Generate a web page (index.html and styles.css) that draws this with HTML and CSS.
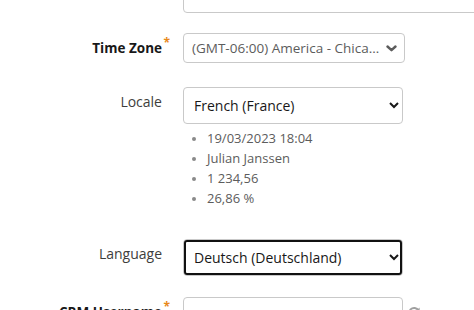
FILE: index.html
```html
<!DOCTYPE html>
<html lang="en">
  <head>
    <meta charset="UTF-8" />
    <meta name="viewport" content="width=device-width, initial-scale=1.0" />
    <title>User Settings</title>
    <link rel="stylesheet" href="styles.css">
  </head>
  <body>
    <div class="form">
      <div class="row row-top">
        <div class="label"></div>
        <div class="input input-wide"></div>
      </div>

      <div class="row row-tz">
        <div class="label bold"><span class="label-text">Time Zone<abbr class="req">*</abbr></span></div>
        <div class="combo">
          <span class="combo-text">(GMT-06:00) America - Chicago</span>
          <svg class="chevron" width="11" height="7" viewBox="0 0 11 7">
            <path d="M1.5 1.5 L5.5 5.2 L9.5 1.5" fill="none" stroke="#5c5c5c" stroke-width="2.4" stroke-linecap="round" stroke-linejoin="round" />
          </svg>
        </div>
      </div>

      <div class="row row-locale">
        <div class="label"><span class="label-text">Locale</span></div>
        <div class="field">
          <select class="select">
            <option>French (France)</option>
          </select>
          <ul class="samples">
            <li>19/03/2023 18:04</li>
            <li>Julian Janssen</li>
            <li>1 234,56</li>
            <li>26,86 %</li>
          </ul>
        </div>
      </div>

      <div class="row row-lang">
        <div class="label"><span class="label-text">Language</span></div>
        <select class="select focused">
          <option>Deutsch (Deutschland)</option>
        </select>
      </div>

      <div class="row row-crm">
        <div class="label bold"><span class="label-text">CRM Username<abbr class="req">*</abbr></span></div>
        <div class="input"></div>
        <svg class="refresh" width="14" height="14" viewBox="0 0 14 14">
          <path d="M11.5 4.5 A5 5 0 1 0 12 8" fill="none" stroke="#a0a0a0" stroke-width="2" />
          <path d="M12.6 1.4 L12.6 5.6 L8.4 5.6 Z" fill="#a0a0a0" />
        </svg>
      </div>
    </div>
  </body>
</html>
```

FILE: styles.css
```css
body {
  margin: 0;
  overflow: hidden;
  background: #fff;
  font-family: "Open Sans", "Liberation Sans", sans-serif;
  font-size: 14px;
  color: #181818;
}
.form {
  display: flex;
  flex-direction: column;
}
.row {
  display: grid;
  grid-template-columns: 183px auto auto;
  justify-content: start;
  align-items: start;
}
.label {
  text-align: right;
  padding: 5px 21px 0 0;
  line-height: 20px;
  color: #3e3e3c;
  white-space: nowrap;
}
.label.bold {
  font-weight: bold;
  font-size: 13.5px;
  color: #181818;
}
.label-text {
  position: relative;
}
.req {
  position: absolute;
  right: -8px;
  top: -6px;
  color: #e8891b;
  font-size: 12px;
  text-decoration: none;
  font-weight: bold;
}
.input {
  box-sizing: border-box;
  width: 220px;
  height: 37px;
  border: 1px solid #c9c9c9;
  border-radius: 4px;
  background: #fff;
}
.input-wide {
  width: 340px;
  height: 31px;
}
.row-top {
  margin-top: -18px;
}
.row-tz {
  margin-top: 20px;
}
.row-locale {
  margin-top: 24px;
}
.row-lang {
  margin-top: 31px;
}
.row-crm {
  margin-top: 21px;
}
.combo {
  box-sizing: border-box;
  width: 222px;
  height: 30px;
  border: 1px solid #c9c9c9;
  border-radius: 4px;
  display: flex;
  align-items: center;
  padding: 0 5px 0 8px;
  gap: 6px;
}
.combo-text {
  flex: 1;
  min-width: 0;
  white-space: nowrap;
  overflow: hidden;
  text-overflow: ellipsis;
  font-size: 13.5px;
  color: #5c5c5c;
}
.chevron {
  flex: none;
  margin-right: 2px;
}
.select {
  box-sizing: border-box;
  width: 220px;
  height: 37px;
  border: 1px solid #c9c9c9;
  border-radius: 4px;
  background: #fff;
  font-family: inherit;
  font-size: 14px;
  color: #181818;
  padding: 0 4px 0 6px;
}
.select.focused {
  outline: 2px solid #111;
  outline-offset: -3px;
}
.samples {
  margin: 4px 0 0;
  padding-left: 24px;
  line-height: 20px;
  font-size: 13px;
  color: #5c5c5c;
}
.samples li::marker {
  color: #8a8a8a;
  font-size: 11px;
}
.refresh {
  margin: 9px 0 0 4px;
}
```
